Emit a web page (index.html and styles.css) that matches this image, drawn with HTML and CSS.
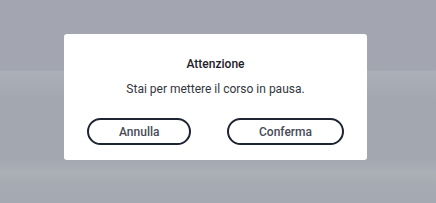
FILE: index.html
```html
<!DOCTYPE html>
<html lang="it">
<head>
<meta charset="utf-8">
<title>Attenzione</title>
<link rel="stylesheet" href="styles.css">
</head>
<body>
<div class="backdrop">
  <div class="dialog">
    <div class="title">Attenzione</div>
    <div class="message">Stai per mettere il corso in pausa.</div>
    <div class="actions">
      <button class="btn">Annulla</button>
      <button class="btn">Conferma</button>
    </div>
  </div>
</div>
</body>
</html>
```

FILE: styles.css
```css
html, body {
  margin: 0;
  padding: 0;
}
body {
  width: 436px;
  height: 203px;
  overflow: hidden;
  font-family: Roboto, "Noto Sans", sans-serif;
  background: linear-gradient(to bottom,
    #a3a6b0 0px, #a3a6b0 70px, #abafb7 71px, #a6aab3 88px, #a3a7b0 100px,
    #a3a7b0 160px, #abafb6 172px, #a6aab2 185px, #a5a9b1 203px);
}
.backdrop {
  padding: 34px 0 0 64px;
}
.dialog {
  width: 303px;
  height: 126px;
  box-sizing: border-box;
  background: #ffffff;
  border-radius: 3px;
  padding: 23px 23px 15px;
  display: flex;
  flex-direction: column;
  align-items: center;
}
.title {
  font-size: 12px;
  line-height: 14px;
  font-weight: 500;
  color: #1e2028;
}
.message {
  margin-top: 10px;
  font-size: 12px;
  line-height: 16px;
  color: #33363e;
}
.actions {
  margin-top: 21px;
  align-self: stretch;
  display: flex;
  justify-content: space-between;
}
.btn {
  height: 27px;
  box-sizing: border-box;
  padding: 0 30px;
  border: 2px solid #1f2433;
  border-radius: 14px;
  background: #ffffff;
  font-family: Roboto, "Noto Sans", sans-serif;
  font-size: 12px;
  font-weight: 500;
  color: #474b57;
}
```
